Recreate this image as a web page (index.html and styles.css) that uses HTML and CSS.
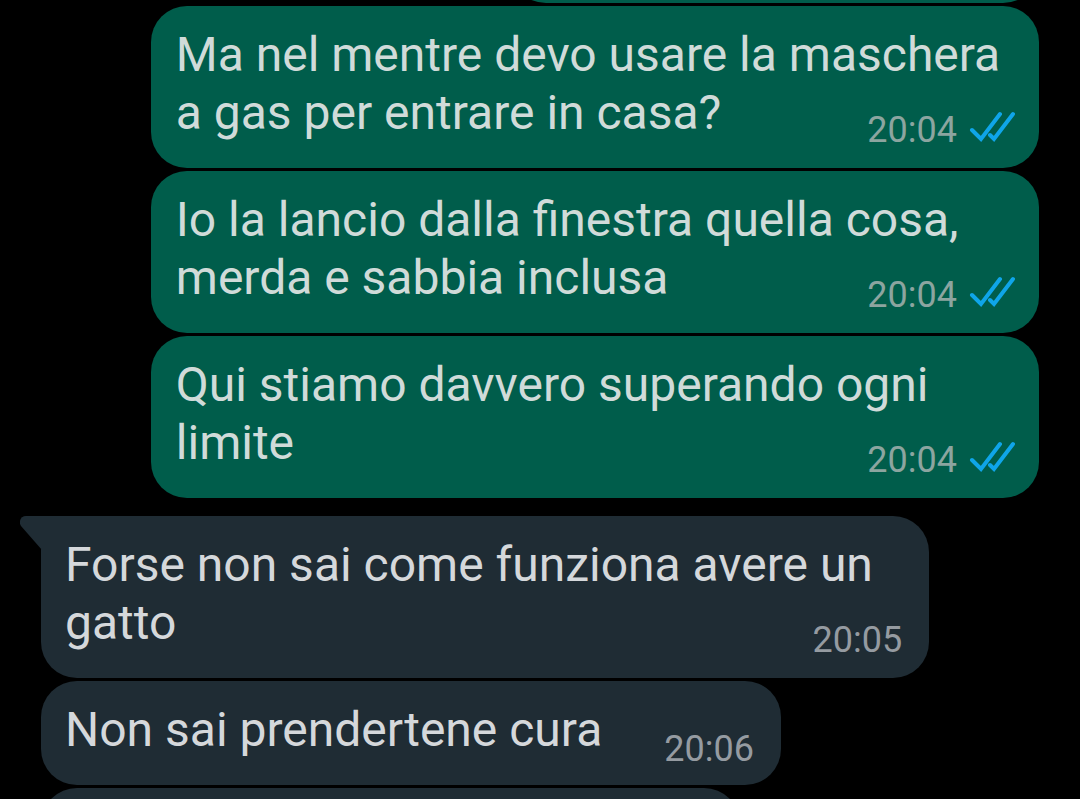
FILE: index.html
```
<!DOCTYPE html>
<html lang="it">
<head>
    <meta charset="UTF-8">
    <meta name="viewport" content="width=device-width, initial-scale=1.0">
    <title>Chat</title>
    <link rel="stylesheet" href="styles.css">
</head>
<body>

    <!-- Shared check mark icon -->
    <svg class="defs" aria-hidden="true">
        <symbol id="ticks" viewBox="0 0 46 38">
            <path d="M3 19 L12 28 L31 3 M21 24 L25 28 L44 3"/>
        </symbol>
    </svg>

    <main class="chat">
        <div class="message sent cut-top"></div>

        <div class="message sent">
            <p>Ma nel mentre devo usare la maschera a gas per entrare in casa?</p>
            <div class="meta"><time>20:04</time><svg class="ticks" role="img" aria-label="Letto"><use href="#ticks"/></svg></div>
        </div>
        <div class="message sent">
            <p>Io la lancio dalla finestra quella cosa, merda e sabbia inclusa</p>
            <div class="meta"><time>20:04</time><svg class="ticks" role="img" aria-label="Letto"><use href="#ticks"/></svg></div>
        </div>
        <div class="message sent">
            <p>Qui stiamo davvero superando ogni limite</p>
            <div class="meta"><time>20:04</time><svg class="ticks" role="img" aria-label="Letto"><use href="#ticks"/></svg></div>
        </div>

        <div class="message received first">
            <svg class="tail" viewBox="0 0 22 34" aria-hidden="true"><path d="M6 0 H22 V34 L1 10 C-2 5 1 0 6 0 Z"/></svg>
            <p>Forse non sai come funziona avere un gatto</p>
            <div class="meta"><time>20:05</time></div>
        </div>
        <div class="message received short">
            <p>Non sai prendertene cura</p>
            <div class="meta"><time>20:06</time></div>
        </div>

        <div class="message received cut-bottom"></div>
    </main>

</body>
</html>
```
FILE: styles.css
```
* {
    box-sizing: border-box;
}

body {
    margin: 0;
    background: #000;
    font-family: Roboto, "Liberation Sans", sans-serif;
    overflow: hidden;
}

.defs {
    display: none;
}

.chat {
    display: flex;
    flex-direction: column;
    gap: 3px;
    height: 100vh;
    padding: 0 41px;
    overflow: hidden;
}

.message {
    position: relative;
    flex-shrink: 0;
    width: 89%;
    padding: 20px 25px 26px;
    border-radius: 36px;
}

.message p {
    margin: 0;
    font-size: 48px;
    line-height: 58px;
}

.sent {
    align-self: flex-end;
    background: #005d4b;
    color: #d0dbd9;
}

.received {
    align-self: flex-start;
    padding-left: 24px;
    background: #1f2c34;
    color: #d5d8db;
}

.first {
    margin-top: 15px;
    border-top-left-radius: 0;
}

/* time and ticks over the bottom right corner of the bubble */
.meta {
    position: absolute;
    right: 24px;
    bottom: 17px;
    display: flex;
    align-items: center;
    gap: 12px;
    color: #8ca5a0;
    font-size: 36px;
    line-height: 42px;
}

.received .meta {
    right: 27px;
    color: #959ba1;
}

.ticks {
    width: 46px;
    height: 38px;
    fill: none;
    stroke: #0fa5e9;
    stroke-width: 4;
    stroke-linecap: round;
}

.tail {
    position: absolute;
    top: 0;
    left: -21px;
    width: 22px;
    height: 34px;
    fill: #1f2c34;
}

/* one line bubble, time sits beside the text */
.short {
    display: flex;
    align-items: flex-end;
    gap: 62px;
    width: auto;
    padding-right: 27px;
}

.short .meta {
    position: static;
    margin-bottom: -11px;
}

/* neighbours cut by the window edges */
.cut-top {
    width: 53%;
    height: 100px;
    margin-top: -97px;
}

.cut-bottom {
    width: 70%;
    height: 100px;
}
```
